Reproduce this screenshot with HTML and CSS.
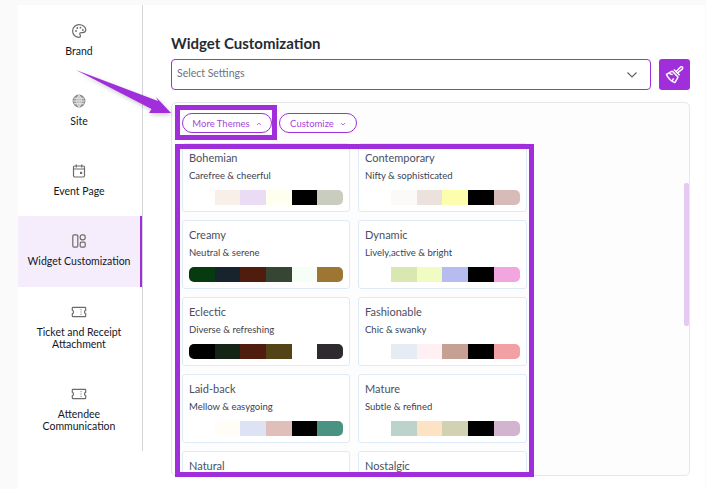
FILE: index.html
```html
<!DOCTYPE html>
<html lang="en">
<head>
<meta charset="utf-8">
<title>Widget Customization</title>
<link rel="stylesheet" href="styles.css">
</head>
<body>
<div class="page">
  <nav class="sidebar">
    <a class="nav-item">
      <svg class="nav-icon" viewBox="0 0 16 16"><path d="M8 1.700c-3.600 0-6.400 2.800-6.400 6.300s2.800 6.300 6.400 6.300c1 0 1.500-.7 1.500-1.400 0-.4-.2-.7-.4-1-.2-.3-.4-.6-.4-1 0-.8.600-1.300 1.400-1.300h1.600c1.800 0 3.100-1.300 3.100-3C14.800 4 11.800 1.700 8 1.700z"/><circle cx="5" cy="8" r=".9" class="fill"/><circle cx="6.300" cy="5" r=".9" class="fill"/><circle cx="9.500" cy="4.700" r=".9" class="fill"/><circle cx="11.800" cy="7" r=".9" class="fill"/></svg>
      <span>Brand</span>
    </a>
    <a class="nav-item">
      <svg class="nav-icon" viewBox="0 0 16 16"><circle cx="8" cy="8" r="5.800" class="globe"/><path class="thin" d="M2.200 8h11.600M2.900 5.300h10.200M2.900 10.700h10.200M8 2.200v11.600M8 2.200C5 5.500 5 10.500 8 13.800M8 2.200c3 3.300 3 8.300 0 11.600"/></svg>
      <span>Site</span>
    </a>
    <a class="nav-item">
      <svg class="nav-icon" viewBox="0 0 16 16"><rect x="2.500" y="3" width="11" height="11" rx="1.200"/><path d="M2.500 6h11M5.300 1.500v3M10.700 1.500v3"/><rect x="9" y="8.800" width="2.200" height="2.200" class="fill"/></svg>
      <span>Event Page</span>
    </a>
    <a class="nav-item active">
      <svg class="nav-icon" viewBox="0 0 16 16"><rect x="1.800" y="1.800" width="5" height="12.400" rx="1.200"/><rect x="9.200" y="1.800" width="5" height="5" rx="2"/><rect x="9.200" y="9.200" width="5" height="5" rx="1.200"/></svg>
      <span>Widget Customization</span>
    </a>
    <a class="nav-item">
      <svg class="nav-icon" viewBox="0 0 16 16"><path d="M2 3.300h12a.7.7 0 0 1 .7.7v2.300a1.800 1.800 0 0 0 0 3.400V12a.7.7 0 0 1-.7.7H2a.7.7 0 0 1-.7-.7V9.700a1.800 1.800 0 0 0 0-3.400V4a.7.7 0 0 1 .7-.7z"/><path d="M10 5v1.200M10 7.400v1.200M10 9.800V11" class="thin"/></svg>
      <span>Ticket and Receipt<br>Attachment</span>
    </a>
    <a class="nav-item">
      <svg class="nav-icon" viewBox="0 0 16 16"><path d="M2 3.300h12a.7.7 0 0 1 .7.7v2.300a1.800 1.800 0 0 0 0 3.400V12a.7.7 0 0 1-.7.7H2a.7.7 0 0 1-.7-.7V9.700a1.800 1.800 0 0 0 0-3.400V4a.7.7 0 0 1 .7-.7z"/><path d="M10 5v1.200M10 7.400v1.200M10 9.800V11" class="thin"/></svg>
      <span>Attendee<br>Communication</span>
    </a>
  </nav>

  <main class="main">
    <h1 class="title">Widget Customization</h1>
    <div class="settings">
      <div class="select">
        <span class="select-label">Select Settings</span>
        <svg class="select-chevron" viewBox="0 0 12 8"><path d="M1.500 1.500 6 6l4.500-4.500"/></svg>
      </div>
      <button class="brush" type="button" aria-label="Apply">
        <svg viewBox="0 0 20 20"><path d="M11.600 7.100 15.500 3c.7-.7 1.700-.6 2.100 0 .4.600.3 1.400-.3 1.900L13 8.500"/><path d="M9.400 5.200l5.500 5.500M7.700 6.700l5.800 5.800"/><path d="M7.700 6.700 2.300 9.800c.5 1.500 2 3.600 3.300 4.900 1.300 1.200 3.300 2.600 4.700 3l3.200-5.200"/><path d="M4.600 8.500c1 .9 2.300 1.400 3.700 1.500M7.400 16.500l1.800-2.700"/></svg>
      </button>
    </div>
    <section class="panel">
      <div class="pills">
        <button class="pill pill-themes" type="button">More Themes <svg viewBox="0 0 8 5"><path d="M1.500 3.800 4 1.300l2.500 2.500"/></svg></button>
        <button class="pill pill-custom" type="button">Customize <svg viewBox="0 0 8 5"><path d="M1.500 1.300 4 3.800l2.500-2.500"/></svg></button>
      </div>
      <div class="themes">
        <article class="card"><h2>Bohemian</h2><p>Carefree &amp; cheerful</p><div class="bar"><i class="c-fff"></i><i class="b2"></i><i class="b3"></i><i class="b4"></i><i class="c-000"></i><i class="b6"></i></div></article>
        <article class="card"><h2>Contemporary</h2><p>Nifty &amp; sophisticated</p><div class="bar"><i class="c-fff"></i><i class="k2"></i><i class="k3"></i><i class="k4"></i><i class="c-000"></i><i class="k6"></i></div></article>
        <article class="card"><h2>Creamy</h2><p>Neutral &amp; serene</p><div class="bar"><i class="r1"></i><i class="r2"></i><i class="r3"></i><i class="r4"></i><i class="r5"></i><i class="r6"></i></div></article>
        <article class="card"><h2>Dynamic</h2><p>Lively,active &amp; bright</p><div class="bar"><i class="c-fff"></i><i class="d2"></i><i class="d3"></i><i class="d4"></i><i class="c-000"></i><i class="d6"></i></div></article>
        <article class="card"><h2>Eclectic</h2><p>Diverse &amp; refreshing</p><div class="bar"><i class="c-000"></i><i class="e2"></i><i class="r3"></i><i class="e4"></i><i class="c-fff"></i><i class="e6"></i></div></article>
        <article class="card"><h2>Fashionable</h2><p>Chic &amp; swanky</p><div class="bar"><i class="c-fff"></i><i class="f2"></i><i class="f3"></i><i class="f4"></i><i class="c-000"></i><i class="f6"></i></div></article>
        <article class="card"><h2>Laid-back</h2><p>Mellow &amp; easygoing</p><div class="bar"><i class="c-fff"></i><i class="l2"></i><i class="l3"></i><i class="l4"></i><i class="c-000"></i><i class="l6"></i></div></article>
        <article class="card"><h2>Mature</h2><p>Subtle &amp; refined</p><div class="bar"><i class="c-fff"></i><i class="m2"></i><i class="m3"></i><i class="m4"></i><i class="c-000"></i><i class="m6"></i></div></article>
        <article class="card"><h2>Natural</h2></article>
        <article class="card"><h2>Nostalgic</h2></article>
      </div>
      <div class="thumb"></div>
    </section>
  </main>
</div>
<div class="mark mark-pill"></div>
<div class="mark mark-list"></div>
<svg class="arrow" viewBox="0 0 110 60"><polygon points="6,10 88,41 86,37 101,53 79,53 81.500,49"/></svg>
</body>
</html>
```

FILE: styles.css
```css
* { box-sizing: border-box; }
html, body { margin: 0; height: 100%; overflow: hidden; }
body {
  background: #fafafa;
  font-family: "Lato", "Noto Sans", sans-serif;
  color: #1f2430;
  padding: 5px 1px 0 18px;
  position: relative;
}
.page { display: flex; background: #fff; height: 484px; }

.sidebar {
  width: 125px;
  height: 446px;
  padding-top: 1px;
  border-right: 1px solid #d4d4d8;
  flex: none;
}
.nav-item {
  display: flex;
  flex-direction: column;
  align-items: center;
  padding: 17px 0 19px;
  min-height: 70px;
  border-right: 2px solid transparent;
  font-size: 10.500px;
  line-height: 12px;
  text-align: center;
  color: #14161f;
}
.nav-icon { width: 16px; height: 16px; margin-bottom: 6px; }
.nav-icon * { fill: none; stroke: #6b6b6b; stroke-width: 1.200; }
.nav-icon .fill { fill: #6b6b6b; stroke: none; }
.nav-icon .thin { stroke-width: .8; stroke: #666; }
.nav-icon .globe { fill: #a3a3a3; stroke: #8a8a8a; }
.nav-icon .globe + .thin { stroke: #f2f2f2; }
.active { background: #f5edfb; border-right-color: #a02fdb; min-height: 71px; }

.main { flex: 1; padding: 28px 15px 0 28px; min-width: 0; }
.title { margin: 0 0 6px; font-size: 15px; line-height: 20px; font-weight: 700; color: #262a33; }
.settings { display: flex; gap: 8px; }
.select {
  flex: 1;
  height: 31px;
  border: 1px solid #a02fdb;
  border-radius: 4px;
  padding: 0 12px 0 5px;
  display: flex;
  align-items: center;
  justify-content: space-between;
  font-size: 10.500px;
  color: #6d7280;
}
.select-label { margin-bottom: 3px; }
.select-chevron { width: 12px; height: 8px; fill: none; stroke: #5f6670; stroke-width: 1.200; }
.brush {
  width: 31px;
  height: 31px;
  padding: 5px;
  border: 0;
  border-radius: 3px;
  background: #a02fdb;
}
.brush svg { display: block; width: 21px; height: 21px; fill: none; stroke: #fff; stroke-width: 1.400; stroke-linejoin: round; }

.panel {
  position: relative;
  margin-top: 12px;
  height: 374px;
  border: 1px solid #e5e7eb;
  border-radius: 5px;
  padding: 10px 10px 0;
  background: #fdfdfd;
}
.pills { display: flex; gap: 7px; height: 20px; }
.pill {
  height: 20px;
  border: 1px solid #a02fdb;
  border-radius: 10px;
  background: #fff;
  color: #a844dd;
  font: 9.500px/18px "Lato", "Noto Sans", sans-serif;
  padding: 1px 0 0;
  display: flex;
  align-items: center;
  justify-content: center;
  gap: 6px;
}
.pill svg { width: 6px; height: 4px; fill: none; stroke: #a02fdb; stroke-width: 1; }
.pill-themes { width: 90px; }
.pill-custom { width: 78px; }

.themes {
  margin-top: 10px;
  width: 345px;
  height: 329px;
  overflow: hidden;
  display: grid;
  grid-template-columns: 168px 169px;
  grid-auto-rows: 69px;
  gap: 8px;
}
.card {
  border: 1px solid #deebf7;
  border-radius: 3px;
  background: #fff;
  padding: 7px 6px 6px;
}
.card h2 { margin: 0; font-size: 11px; line-height: 14px; font-weight: 400; color: #4a4f63; }
.card p { margin: 4px 0 7px; font-size: 9.500px; line-height: 14px; color: #3a3f55; }
.bar { display: flex; height: 15px; border-radius: 0 5px 5px 0; overflow: hidden; }
.card:nth-child(3) .bar, .card:nth-child(5) .bar { border-radius: 5px; }
.bar i { flex: 1; }
.c-fff { background: #fff; } .c-000 { background: #000; }
.b2 { background: #f7efe8; } .b3 { background: #ebdcf5; } .b4 { background: #fffff0; } .b6 { background: #c8cdbf; }
.k2 { background: #fbfaf8; } .k3 { background: #ebe2dd; } .k4 { background: #fdfdae; } .k6 { background: #d6bbb8; }
.r1 { background: #063a0f; } .r2 { background: #18242d; } .r3 { background: #4e1d0d; } .r4 { background: #354632; } .r5 { background: #f6fff6; } .r6 { background: #9d7633; }
.d2 { background: #d9e7b0; } .d3 { background: #f0fcc2; } .d4 { background: #b6bcef; } .d6 { background: #f3a5df; }
.e2 { background: #142415; } .e4 { background: #534418; } .e6 { background: #2f2a30; }
.f2 { background: #e5ecf3; } .f3 { background: #fff0f5; } .f4 { background: #c6a193; } .f6 { background: #f3a0a5; }
.l2 { background: #fffdf6; } .l3 { background: #dde3f5; } .l4 { background: #e0bfba; } .l6 { background: #4a9383; }
.m2 { background: #bbd3cb; } .m3 { background: #fde3c3; } .m4 { background: #d2d2b3; } .m6 { background: #d2b3d0; }

.thumb {
  position: absolute;
  right: 0;
  top: 80px;
  width: 5px;
  height: 143px;
  border-radius: 2px;
  background: #e6c8f5;
}

.mark { position: absolute; border: 5px solid #a02fdb; }
.mark-pill { left: 175px; top: 105px; width: 102px; height: 35px; }
.mark-list { left: 175px; top: 144px; width: 359px; height: 333px; }
.arrow {
  position: absolute;
  left: 70px;
  top: 60px;
  width: 110px;
  height: 60px;
  fill: #a02fdb;
  filter: drop-shadow(1px 2px 2px rgba(0, 0, 0, .2));
}
```
